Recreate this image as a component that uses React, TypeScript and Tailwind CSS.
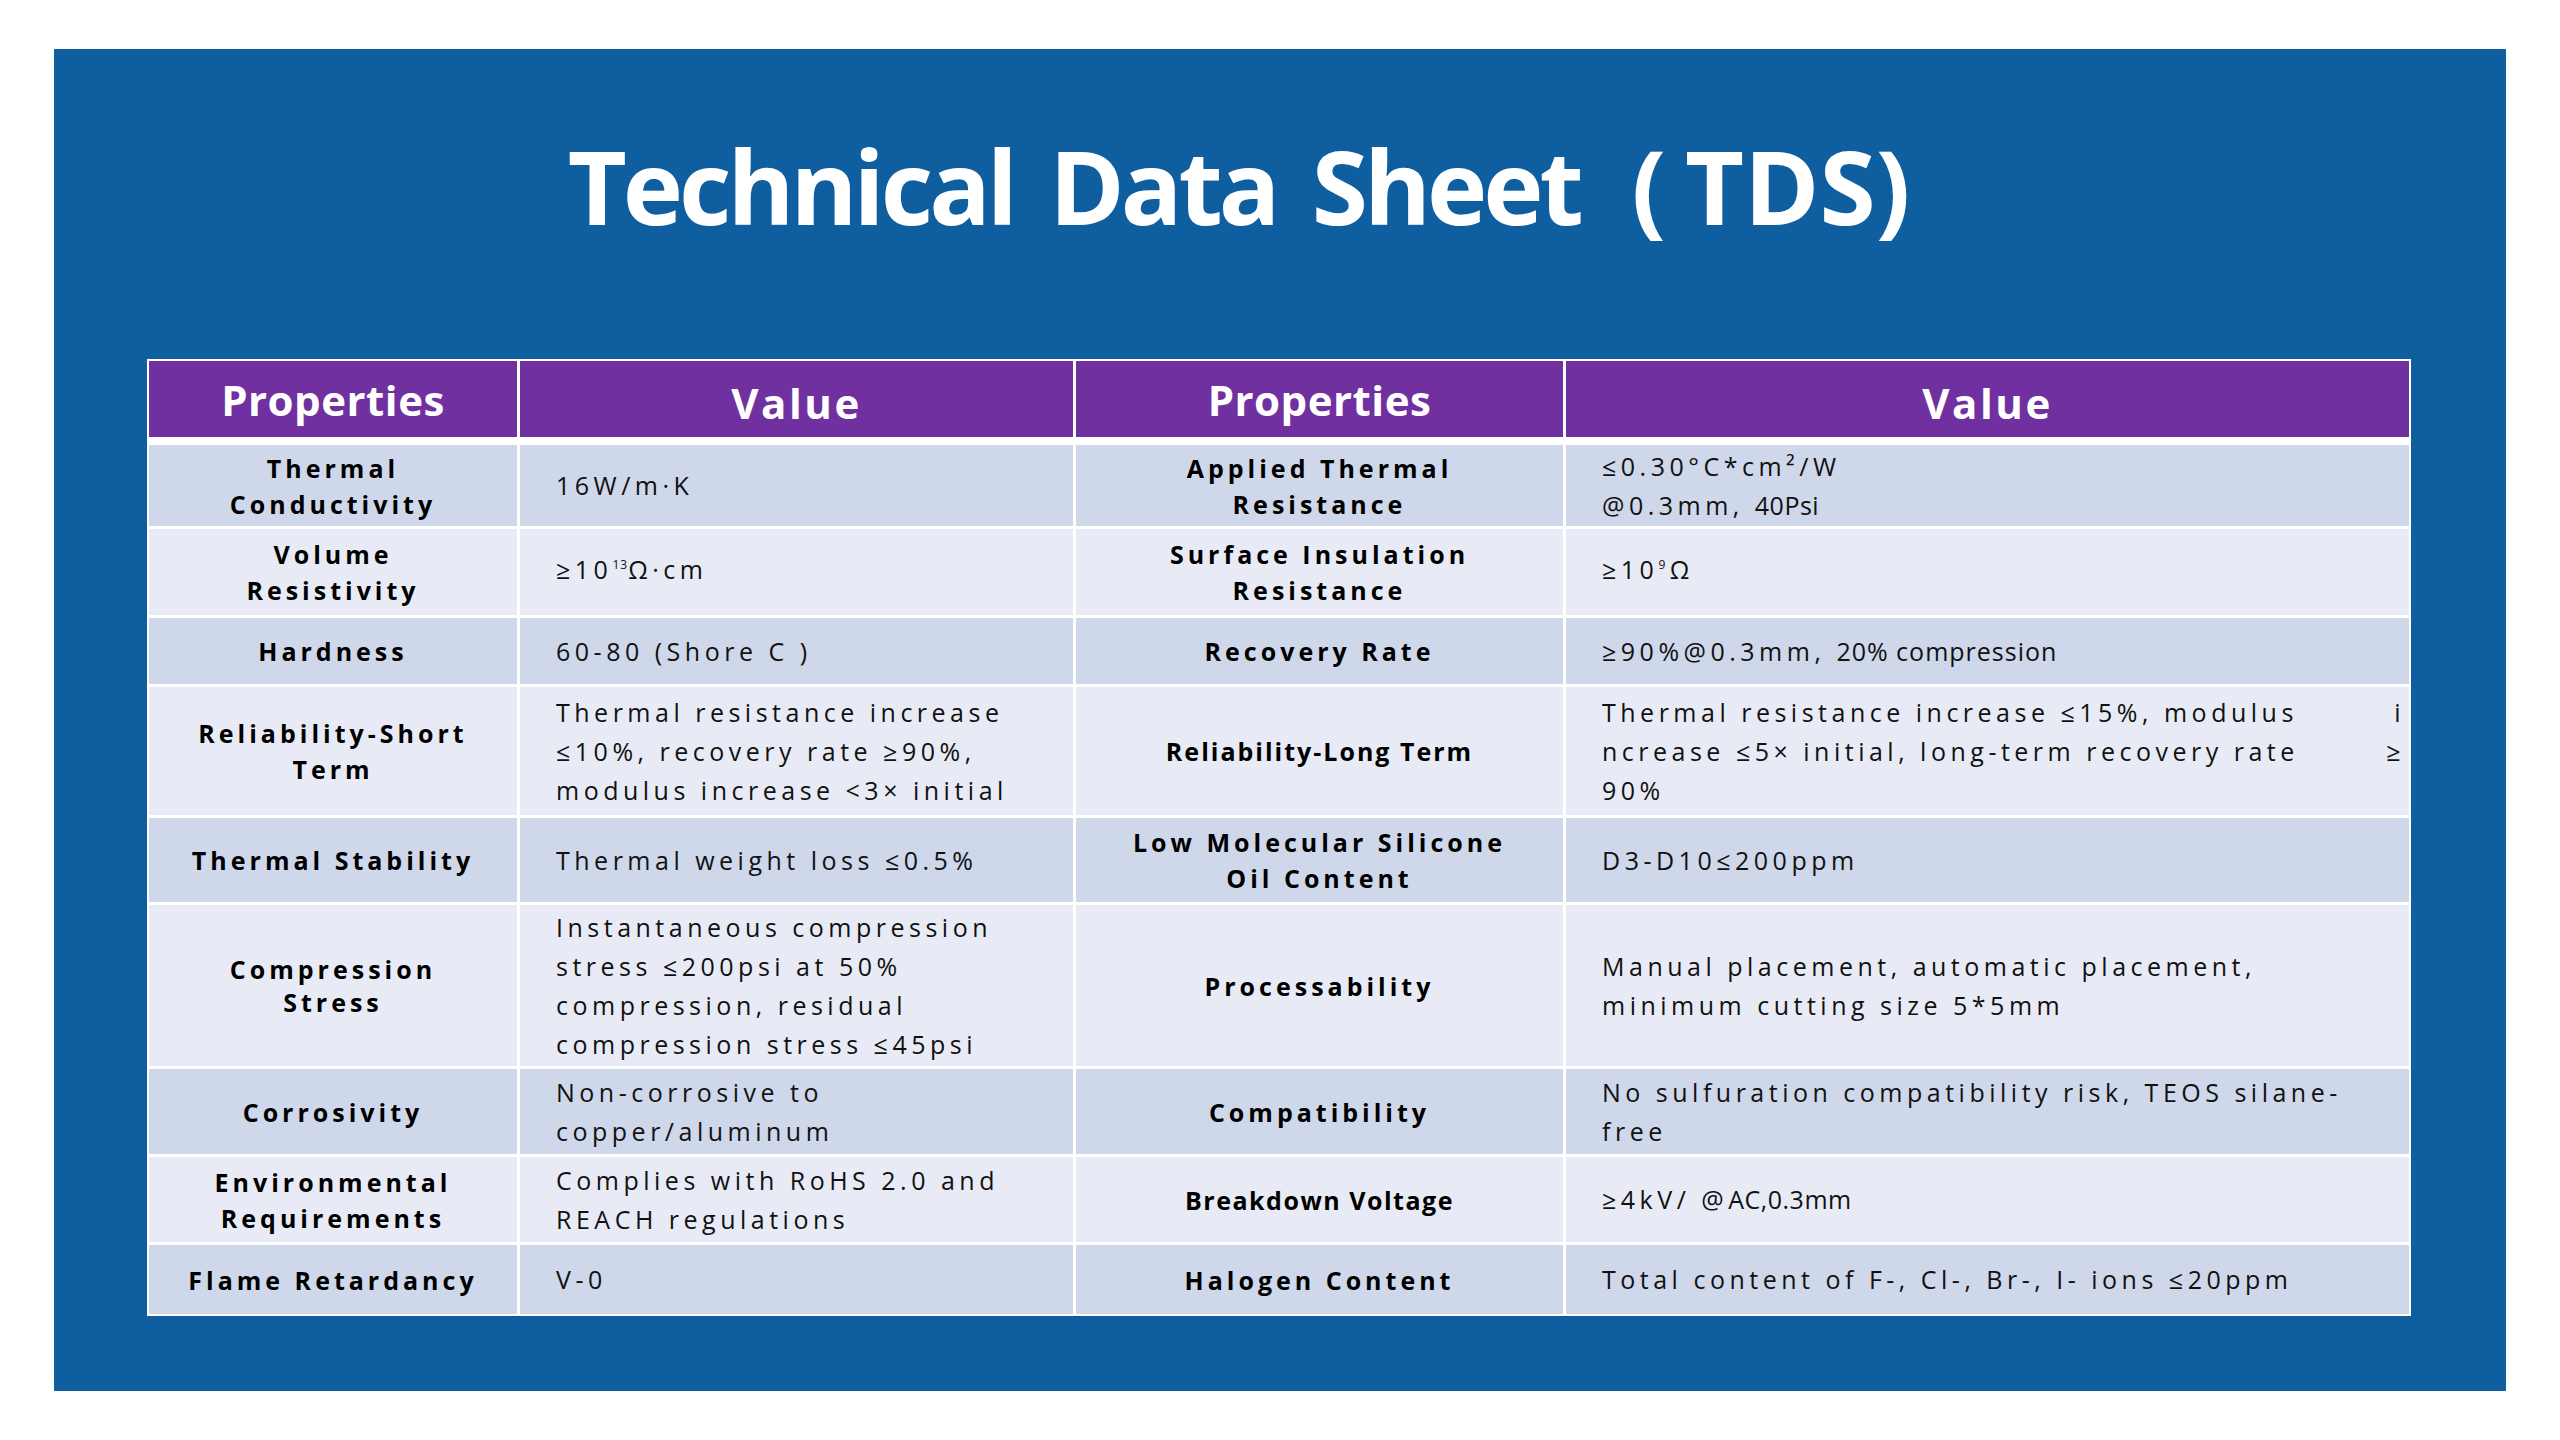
import type { ReactNode } from "react";

type Row = {
  h: string;
  bg: string;
  p1: ReactNode;
  v1: ReactNode;
  p2: ReactNode;
  v2: ReactNode;
};

const DARK = "bg-[#cfd7ea]";
const LIGHT = "bg-[#e8ebf5]";

function Prop({ bg, children }: { bg: string; children: ReactNode }) {
  return (
    <div
      className={`${bg} flex items-center justify-center px-2 text-center text-[25px] font-bold leading-[36px] tracking-[4px] text-black`}
    >
      <div>{children}</div>
    </div>
  );
}

function Val({ bg, children, pr = "pr-4" }: { bg: string; children: ReactNode; pr?: string }) {
  return (
    <div
      className={`${bg} flex items-center pl-[36px] ${pr} text-[25px] leading-[39px] tracking-[4.5px] text-[#111]`}
    >
      <div className="w-full">{children}</div>
    </div>
  );
}

const rows: Row[] = [
  {
    h: "h-[81px]",
    bg: DARK,
    p1: (
      <>
        Thermal
        <br />
        Conductivity
      </>
    ),
    v1: "16W/m·K",
    p2: (
      <>
        Applied Thermal
        <br />
        Resistance
      </>
    ),
    v2: (
      <>
        ≤0.30°C*cm²/W
        <br />
        @0.3mm, <span className="tracking-[0.5px]">40Psi</span>
      </>
    ),
  },
  {
    h: "h-[86px]",
    bg: LIGHT,
    p1: (
      <>
        Volume
        <br />
        Resistivity
      </>
    ),
    v1: (
      <>
        ≥10<span className="relative -top-[10px] text-[12px] tracking-[1px]">13</span>Ω·cm
      </>
    ),
    p2: (
      <>
        Surface Insulation
        <br />
        Resistance
      </>
    ),
    v2: (
      <>
        ≥10<span className="relative -top-[10px] text-[12px]">9</span>Ω
      </>
    ),
  },
  {
    h: "h-[66px]",
    bg: DARK,
    p1: "Hardness",
    v1: "60-80 (Shore C )",
    p2: "Recovery Rate",
    v2: (
      <>
        ≥90%@0.3mm, <span className="tracking-[1px]">20% compression</span>
      </>
    ),
  },
  {
    h: "h-[128px]",
    bg: LIGHT,
    p1: (
      <>
        Reliability-Short
        <br />
        Term
      </>
    ),
    v1: (
      <>
        Thermal resistance increase
        <br />
        ≤10%, recovery rate ≥90%,
        <br />
        modulus increase &lt;3× initial
      </>
    ),
    p2: <span className="tracking-[2px]">Reliability-Long Term</span>,
    v2: (
      <>
        <div className="flex justify-between">
          <span>Thermal resistance increase ≤15%, modulus</span>
          <span>i</span>
        </div>
        <div className="flex justify-between">
          <span>ncrease ≤5× initial, long-term recovery rate</span>
          <span>≥</span>
        </div>
        <div>90%</div>
      </>
    ),
  },
  {
    h: "h-[84px]",
    bg: DARK,
    p1: "Thermal Stability",
    v1: "Thermal weight loss ≤0.5%",
    p2: (
      <>
        Low Molecular Silicone
        <br />
        Oil Content
      </>
    ),
    v2: "D3-D10≤200ppm",
  },
  {
    h: "h-[161px]",
    bg: LIGHT,
    p1: (
      <div className="leading-[33px]">
        Compression
        <br />
        Stress
      </div>
    ),
    v1: (
      <>
        Instantaneous compression
        <br />
        stress ≤200psi at 50%
        <br />
        compression, residual
        <br />
        compression stress ≤45psi
      </>
    ),
    p2: "Processability",
    v2: (
      <>
        Manual placement, automatic placement,
        <br />
        minimum cutting size 5*5mm
      </>
    ),
  },
  {
    h: "h-[85px]",
    bg: DARK,
    p1: "Corrosivity",
    v1: (
      <>
        Non-corrosive to
        <br />
        copper/aluminum
      </>
    ),
    p2: "Compatibility",
    v2: (
      <>
        No sulfuration compatibility risk, TEOS silane-
        <br />
        free
      </>
    ),
  },
  {
    h: "h-[85px]",
    bg: LIGHT,
    p1: (
      <>
        Environmental
        <br />
        Requirements
      </>
    ),
    v1: (
      <>
        Complies with RoHS 2.0 and
        <br />
        REACH regulations
      </>
    ),
    p2: <span className="tracking-[1.5px]">Breakdown Voltage</span>,
    v2: (
      <>
        ≥4kV/ @<span className="tracking-[0.5px]">AC,0.3mm</span>
      </>
    ),
  },
  {
    h: "h-[69px]",
    bg: DARK,
    p1: "Flame Retardancy",
    v1: "V-0",
    p2: "Halogen Content",
    v2: "Total content of F-, Cl-, Br-, I- ions ≤20ppm",
  },
];

const COLS = "grid grid-cols-[368px_553px_487px_843px] gap-x-[3px]";

export default function App() {
  return (
    <div className="h-[1440px] w-[2560px] bg-white pl-[54px] pt-[49px] font-['Open_Sans',sans-serif]">
      <div className="h-[1342px] w-[2452px] bg-[#0f5e9f] pt-[86px]">
        {/* Title */}
        <h1 className="pr-[82px] text-center text-[102px] font-bold leading-[102px] tracking-[-4px] text-white [word-spacing:13px]">
          Technical Data Sheet <span className="ml-[16px] mr-[23px]">(</span>
          <span className="tracking-[0px]">TDS)</span>
        </h1>

        {/* Table */}
        <div className="ml-[93px] mt-[122px] w-[2264px] bg-white p-[2px]">
          <div className={`${COLS} h-[76px] text-[42px] font-bold text-white`}>
            <div className="flex items-center justify-center bg-[#7030a0] tracking-[0.5px]">Properties</div>
            <div className="flex items-center justify-center bg-[#7030a0] pt-[6px] tracking-[2.5px]">Value</div>
            <div className="flex items-center justify-center bg-[#7030a0] tracking-[0.5px]">Properties</div>
            <div className="flex items-center justify-center bg-[#7030a0] pt-[6px] tracking-[2.5px]">Value</div>
          </div>
          <div className="mt-[8px] flex flex-col gap-y-[3px]">
            {rows.map((r, i) => (
              <div key={i} className={`${COLS} ${r.h}`}>
                <Prop bg={r.bg}>{r.p1}</Prop>
                <Val bg={r.bg}>{r.v1}</Val>
                <Prop bg={r.bg}>{r.p2}</Prop>
                <Val bg={r.bg} pr={i === 3 ? "pr-[4px]" : "pr-4"}>
                  {r.v2}
                </Val>
              </div>
            ))}
          </div>
        </div>
      </div>
    </div>
  );
}
